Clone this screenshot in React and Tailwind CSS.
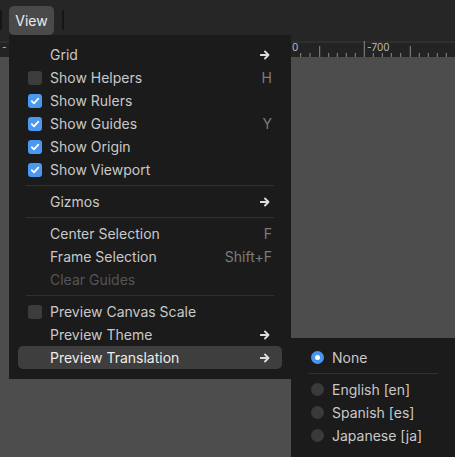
import React from 'react'

const ticks = [300.7, 310, 328.7, 337.3, 346.3, 355.3, 373.3, 382.3, 391.3, 400.7, 419.3, 428.3, 437.3, 446.3]
const mids = [319.7, 410.3]

function Arrow() {
  return (
    <svg width="10" height="10" viewBox="0 0 10 10" className="text-[#dedede]">
      <path d="M0.5 5h8M5 1.5 8.5 5 5 8.5" fill="none" stroke="currentColor" strokeWidth="1.8" strokeLinecap="round" strokeLinejoin="round" />
    </svg>
  )
}

function Check({ on }) {
  if (!on) return <span className="w-[14px] h-[14px] rounded-[3px] bg-[#3c3c3c]" />
  return (
    <span className="w-[14px] h-[14px] rounded-[3px] bg-[#4a98f2] flex items-center justify-center">
      <svg width="10" height="10" viewBox="0 0 10 10">
        <path d="M1.8 5.2 4 7.4 8.3 2.6" fill="none" stroke="#fff" strokeWidth="1.8" strokeLinecap="round" strokeLinejoin="round" />
      </svg>
    </span>
  )
}

function Item({ label, check, shortcut, sub, disabled, active }) {
  return (
    <div className={`h-[23px] flex items-center pl-[10px] pr-[10px] rounded-[5px] ${active ? 'bg-[#3e3e3e]' : ''}`}>
      <div className="w-[22px] flex items-center">{check !== undefined && <Check on={check} />}</div>
      <span className={`flex-1 ${disabled ? 'text-[#555555]' : active ? 'text-[#ececec]' : 'text-[#c9c9c9]'}`}>{label}</span>
      {shortcut && <span className="text-[#7c7c7c]">{shortcut}</span>}
      {sub && <span className="pr-[2px] flex items-center"><Arrow /></span>}
    </div>
  )
}

function Sep() {
  return <div className="h-[9px] flex items-center px-[8px]"><div className="h-px w-full bg-[#303030]" /></div>
}

function Radio({ label, on }) {
  return (
    <div className="h-[23px] flex items-center pl-[11px]">
      {on ? (
        <span className="w-[13px] h-[13px] rounded-full bg-[#4a94ee] flex items-center justify-center">
          <span className="w-[5px] h-[5px] rounded-full bg-white" />
        </span>
      ) : (
        <span className="w-[13px] h-[13px] rounded-full bg-[#3a3a3a]" />
      )}
      <span className="ml-[8px] text-[#c9c9c9]">{label}</span>
    </div>
  )
}

export default function App() {
  return (
    <div className="relative w-[455px] h-[457px] overflow-hidden bg-[#4d4d4d] font-['Inter',sans-serif] text-[14px] flex flex-col">
      <div className="h-[41px] bg-[#262626] flex items-start">
        <div className="w-[2px] h-[20px] mt-[10px] bg-[#151515]" />
        <div className="ml-[7px] mt-[6px] h-[29px] w-[45px] rounded-[5px] bg-[#4a4a4a] flex items-center justify-center text-[#ececec]">View</div>
        <div className="ml-[8px] w-[2px] h-[20px] mt-[10px] bg-[#151515]" />
      </div>
      <svg width="455" height="16" className="block bg-[#232323]">
        <rect x="0" y="0" width="455" height="2" fill="#2e2e2e" />
        {ticks.map((x) => (
          <line key={x} x1={x} x2={x} y1="12" y2="16" stroke="#8a8a8a" strokeWidth="1" />
        ))}
        {mids.map((x) => (
          <line key={x} x1={x} x2={x} y1="5" y2="16" stroke="#8a8a8a" strokeWidth="1" />
        ))}
        <line x1="364.3" x2="364.3" y1="0" y2="16" stroke="#8a8a8a" strokeWidth="1" />
        <text x="2" y="10" fontSize="10" fill="#bdbdbd" fontFamily="Inter, sans-serif">-</text>
        <text x="292" y="10" fontSize="10" fill="#bdbdbd" fontFamily="Inter, sans-serif">0</text>
        <text x="367" y="10" fontSize="10" fill="#bdbdbd" fontFamily="Inter, sans-serif">-700</text>
      </svg>
      <div className="flex-1" />

      <div className="absolute left-[9px] top-[35px] w-[282px] h-[344px] bg-[#1b1b1b] px-[9px] pt-[8px]">
        <Item label="Grid" sub />
        <Item label="Show Helpers" check={false} shortcut="H" />
        <Item label="Show Rulers" check />
        <Item label="Show Guides" check shortcut="Y" />
        <Item label="Show Origin" check />
        <Item label="Show Viewport" check />
        <Sep />
        <Item label="Gizmos" sub />
        <Sep />
        <Item label="Center Selection" shortcut="F" />
        <Item label="Frame Selection" shortcut="Shift+F" />
        <Item label="Clear Guides" disabled />
        <Sep />
        <Item label="Preview Canvas Scale" check={false} />
        <Item label="Preview Theme" sub />
        <Item label="Preview Translation" sub active />
      </div>

      <div className="absolute left-[291px] top-[338px] w-[164px] h-[130px] bg-[#1b1b1b] px-[9px] pt-[8px]">
        <Radio label="None" on />
        <Sep />
        <Radio label="English [en]" />
        <Radio label="Spanish [es]" />
        <Radio label="Japanese [ja]" />
      </div>
    </div>
  )
}
